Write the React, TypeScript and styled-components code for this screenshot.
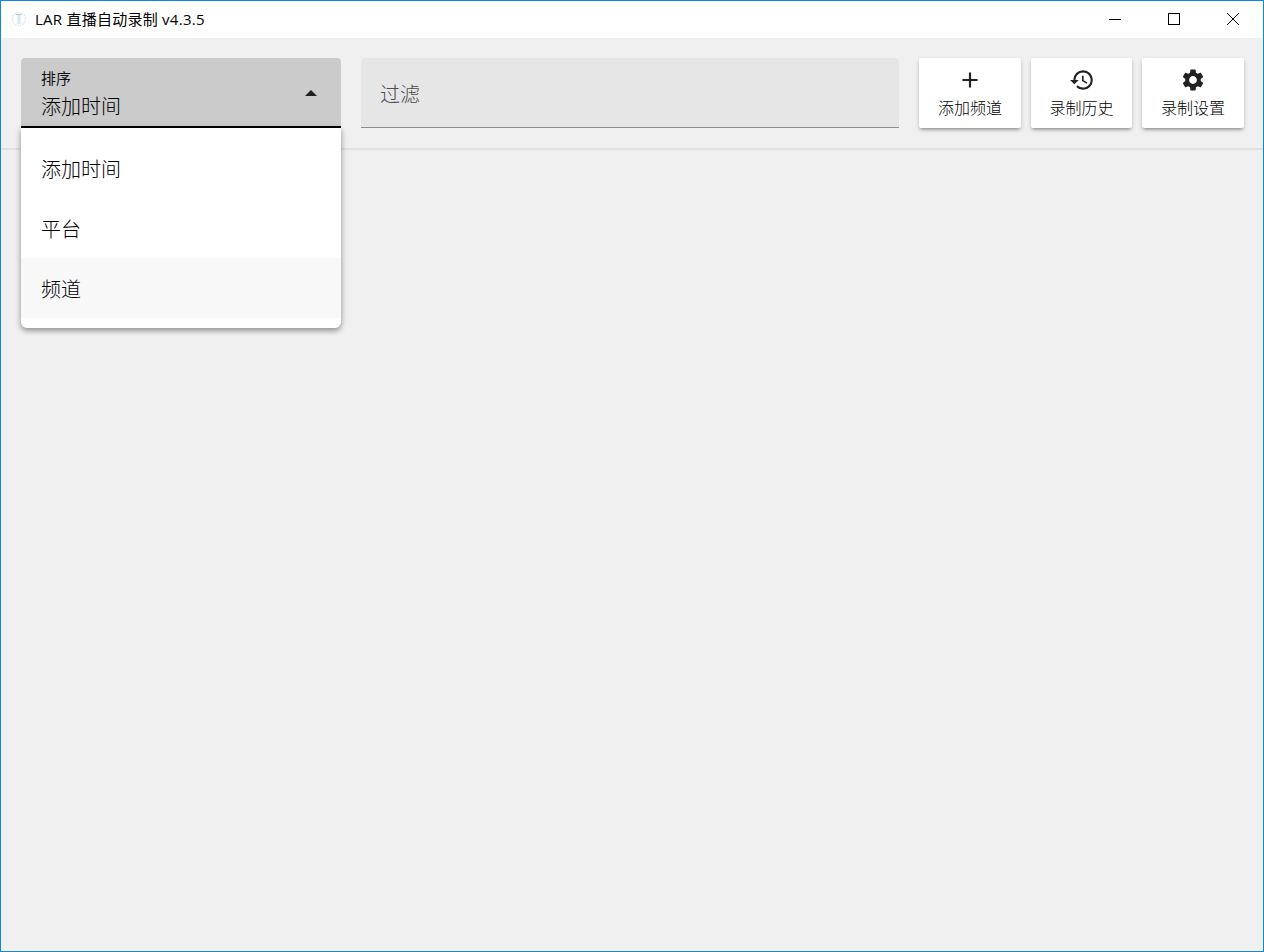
import styled, { createGlobalStyle } from "styled-components";
import { MdAdd, MdHistory, MdSettings } from "react-icons/md";

const GlobalStyle = createGlobalStyle`
    html, body {
        margin: 0;
        padding: 0;
    }
    body {
        font-family: "Noto Sans CJK SC", "Liberation Sans", sans-serif;
    }
`;

const Window = styled.div`
    box-sizing: border-box;
    width: 1264px;
    height: 952px;
    border: 1px solid #0f86e0;
    background: #f0f0f0;
    display: flex;
    flex-direction: column;
    overflow: hidden;
`;
const TitleBar = styled.div`
    height: 37px;
    flex: none;
    background: #fff;
    display: flex;
    align-items: center;
    padding-left: 10px;
`;
const AppIcon = styled.svg`
    width: 16px;
    height: 16px;
    margin-top: -2px;
`;
const TitleText = styled.span`
    margin-left: 8px;
    font-family: "Open Sans", "Noto Sans CJK SC", sans-serif;
    font-size: 15px;
    letter-spacing: 0.25px;
    color: #000;
    margin-top: -3px;
`;
const WindowControls = styled.div`
    margin-left: auto;
    display: flex;
    height: 100%;
    padding-right: 1px;
`;
const ControlButton = styled.div`
    width: 59px;
    height: 100%;
    display: flex;
    align-items: center;
    justify-content: center;
    svg {
        width: 14px;
        height: 14px;
        margin-top: -1px;
    }
`;
const Toolbar = styled.div`
    box-sizing: border-box;
    height: 111px;
    flex: none;
    display: flex;
    gap: 20px;
    padding: 20px 19px 0 20px;
    border-bottom: 1px solid #e0e0e0;
    box-shadow: 0 1px 1px rgba(0, 0, 0, 0.05);
`;
const SelectWrap = styled.div`
    position: relative;
    width: 320px;
    flex: none;
`;
const SelectField = styled.div`
    box-sizing: border-box;
    height: 70px;
    background: #cbcbcb;
    border-radius: 4px 4px 0 0;
    border-bottom: 2px solid #000;
    padding: 10px 20px 0;
    position: relative;
`;
const FieldLabel = styled.div`
    font-size: 15px;
    font-weight: 400;
    line-height: 20px;
    color: #111;
`;
const FieldValue = styled.div`
    font-size: 20px;
    font-weight: 300;
    line-height: 35px;
    color: #000;
`;
const Arrow = styled.div`
    position: absolute;
    right: 24px;
    top: 32px;
    width: 0;
    height: 0;
    border-left: 6px solid transparent;
    border-right: 6px solid transparent;
    border-bottom: 6px solid #212121;
`;
const Menu = styled.div`
    position: absolute;
    top: 70px;
    left: 0;
    right: 0;
    padding: 10px 0;
    background: #fff;
    border-radius: 0 0 6px 6px;
    box-shadow: 0 3px 5px rgba(0, 0, 0, 0.3), 0 1px 8px rgba(0, 0, 0, 0.14);
    z-index: 2;
`;
const MenuItem = styled.div<{ $hover?: boolean }>`
    height: 60px;
    line-height: 62px;
    padding: 0 20px;
    font-size: 20px;
    font-weight: 300;
    color: #000;
    background: ${(p) => (p.$hover ? "#f8f8f8" : "transparent")};
`;
const FilterField = styled.div`
    box-sizing: border-box;
    flex: 1;
    height: 70px;
    background: #e6e6e6;
    border-radius: 4px 4px 0 0;
    border-bottom: 1px solid #8d8d8d;
    padding: 0 19px;
    line-height: 71px;
    font-size: 20px;
    font-weight: 300;
    color: #4a4a4a;
`;
const ActionGroup = styled.div`
    display: flex;
    gap: 10px;
    height: 70px;
`;
const ActionButton = styled.button<{ $width: number }>`
    width: ${(p) => p.$width}px;
    height: 70px;
    border: 0;
    padding: 9px 0 0;
    background: #fff;
    border-radius: 2px;
    box-shadow: 0 3px 3px -2px rgba(0, 0, 0, 0.3), 0 2px 4px rgba(0, 0, 0, 0.2);
    display: flex;
    flex-direction: column;
    align-items: center;
    font-family: inherit;
    font-size: 16px;
    font-weight: 300;
    color: #000;
    svg {
        width: 26px;
        height: 26px;
        color: #212121;
        flex: none;
    }
`;
const ActionLabel = styled.span`
    line-height: 20px;
    margin-top: 4px;
`;
const Content = styled.div`
    flex: 1;
`;

export default function App() {
    return (
        <>
            <GlobalStyle />
            <Window>
                <TitleBar>
                    <AppIcon viewBox="0 0 16 16">
                        <circle cx="8" cy="8" r="6.5" fill="none" stroke="#dbe9f5" strokeWidth="1.5" strokeDasharray="1.5 1" />
                        <rect x="6.5" y="3" width="3" height="10" fill="#d6e7f5" />
                        <rect x="5" y="3" width="6" height="1" fill="#c5c5c5" />
                    </AppIcon>
                    <TitleText>LAR 直播自动录制 v4.3.5</TitleText>
                    <WindowControls>
                        <ControlButton>
                            <svg viewBox="0 0 14 14">
                                <path d="M1 7.5h12" stroke="#000" strokeWidth="1" fill="none" />
                            </svg>
                        </ControlButton>
                        <ControlButton>
                            <svg viewBox="0 0 14 14">
                                <rect x="1.5" y="1.5" width="11" height="11" stroke="#000" strokeWidth="1" fill="none" />
                            </svg>
                        </ControlButton>
                        <ControlButton>
                            <svg viewBox="0 0 14 14">
                                <path d="M1 1l12 12M13 1L1 13" stroke="#000" strokeWidth="1" fill="none" />
                            </svg>
                        </ControlButton>
                    </WindowControls>
                </TitleBar>
                <Toolbar>
                    <SelectWrap>
                        <SelectField>
                            <FieldLabel>排序</FieldLabel>
                            <FieldValue>添加时间</FieldValue>
                            <Arrow />
                        </SelectField>
                        <Menu>
                            <MenuItem>添加时间</MenuItem>
                            <MenuItem>平台</MenuItem>
                            <MenuItem $hover>频道</MenuItem>
                        </Menu>
                    </SelectWrap>
                    <FilterField>过滤</FilterField>
                    <ActionGroup>
                        <ActionButton $width={102}>
                            <MdAdd />
                            <ActionLabel>添加频道</ActionLabel>
                        </ActionButton>
                        <ActionButton $width={101}>
                            <MdHistory />
                            <ActionLabel>录制历史</ActionLabel>
                        </ActionButton>
                        <ActionButton $width={102}>
                            <MdSettings />
                            <ActionLabel>录制设置</ActionLabel>
                        </ActionButton>
                    </ActionGroup>
                </Toolbar>
                <Content />
            </Window>
        </>
    );
}
